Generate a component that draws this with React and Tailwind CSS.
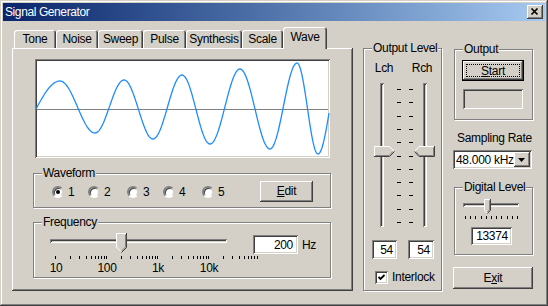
import React from 'react'

const raised = 'shadow-[inset_-1px_-1px_0_#404040,inset_1px_1px_0_#fff,inset_-2px_-2px_0_#808080]'
const sunken = 'shadow-[inset_1px_1px_0_#808080,inset_-1px_-1px_0_#fff,inset_2px_2px_0_#404040,inset_-2px_-2px_0_#d4d0c8]'
const etched = 'border border-[#808080] shadow-[inset_1px_1px_0_#fff,1px_1px_0_#fff]'

function wavePath() {
  const ext = [[60, 81], [95, 133], [124, 80], [153, 139], [182, 75], [210, 144], [240, 69], [270, 149], [297, 63], [318, 154], [342, 60]]
  const pts = []
  for (let x = 36; x <= 60; x++) {
    const t = (x - 36) / 24
    pts.push([x, 109 + (81 - 109) * Math.sin((Math.PI / 2) * t)])
  }
  for (let i = 0; i < ext.length - 1; i++) {
    const [x0, y0] = ext[i]
    const [x1, y1] = ext[i + 1]
    for (let x = x0 + 1; x <= x1 && x <= 329; x++) {
      const t = (x - x0) / (x1 - x0)
      pts.push([x, y0 + (y1 - y0) * (1 - Math.cos(Math.PI * t)) / 2])
    }
  }
  return 'M' + pts.map(p => `${p[0]},${p[1].toFixed(1)}`).join(' L')
}

function GroupLabel({ children }) {
  return (
    <span className="absolute -top-[8px] left-[8px] bg-[#d4d0c8] px-[1px] leading-[14px] whitespace-nowrap">{children}</span>
  )
}

function Track({ className }) {
  return <div className={`absolute ${sunken} bg-[#d4d0c8] ${className}`} />
}

function DownThumb() {
  return (
    <svg width="11" height="20" className="block">
      <polygon points="0,0 11,0 11,15 5.5,20 0,15" fill="#d4d0c8" />
      <path d="M5,18.5 L0.5,14 V0.5 H10" fill="none" stroke="#fff" />
      <path d="M10.5,0 V14.5 L5.5,19.5" fill="none" stroke="#404040" />
      <path d="M9.5,1.5 V14 L5.5,18" fill="none" stroke="#808080" />
    </svg>
  )
}

function SmallThumb() {
  return (
    <svg width="7" height="15" className="block">
      <polygon points="0,0 7,0 7,11 3.5,15 0,11" fill="#d4d0c8" />
      <path d="M3,14 L0.5,11 V0.5 H6" fill="none" stroke="#fff" />
      <path d="M6.5,0 V11 L3.5,14.5" fill="none" stroke="#404040" />
      <path d="M5.5,1.5 V10.5 L3.5,13" fill="none" stroke="#808080" />
    </svg>
  )
}

function RightThumb() {
  return (
    <svg width="21" height="11" className="block">
      <polygon points="0,0 15.5,0 20.5,5.5 15.5,11 0,11" fill="#d4d0c8" />
      <path d="M0.5,10 V0.5 H15.5 L20,5" fill="none" stroke="#fff" />
      <path d="M0,10.5 H15.5 L20.5,5.5" fill="none" stroke="#404040" />
      <path d="M1.5,9.5 H15 L19,5.5" fill="none" stroke="#808080" />
    </svg>
  )
}

function LeftThumb() {
  return (
    <svg width="21" height="11" className="block">
      <polygon points="0,5.5 5,0 21,0 21,11 5,11" fill="#d4d0c8" />
      <path d="M0.5,5.5 L5,0.5 H20" fill="none" stroke="#fff" />
      <path d="M0.5,5.5 L5,10.5 H20.5 V0" fill="none" stroke="#404040" />
      <path d="M2,5.5 L5.5,9.5 H19.5 V1.5" fill="none" stroke="#808080" />
    </svg>
  )
}

function Radio({ checked, label, className }) {
  return (
    <div className={`flex items-center ${className}`}>
      <div className="w-[12px] h-[12px] rounded-full bg-white border-2 border-t-[#808080] border-l-[#808080] border-b-white border-r-[#d4d0c8] shadow-[inset_1px_1px_0_#404040] flex items-center justify-center">
        {checked && <div className="w-[4px] h-[4px] rounded-full bg-black" />}
      </div>
      <span className="ml-[4px]">{label}</span>
    </div>
  )
}

function Button({ className, children }) {
  return (
    <div className={`${raised} bg-[#d4d0c8] flex items-center justify-center ${className}`}>{children}</div>
  )
}

const freqTicks = []
for (const d of [10, 100, 1000, 10000]) {
  for (let m = 1; m <= 9; m++) freqTicks.push(d * m)
}
freqTicks.push(20000)
const fx = v => 5 + (Math.log10(v) - 1) * 51

const tabs = [
  ['Tone', 'w-[42px]'],
  ['Noise', 'w-[42px]'],
  ['Sweep', 'w-[45px]'],
  ['Pulse', 'w-[43px]'],
  ['Synthesis', 'w-[56px]'],
  ['Scale', 'w-[41px]'],
]

const levelTicks = Array.from({ length: 11 }, (_, i) => 6 + i * 13.3)
const digitalTicks = Array.from({ length: 11 }, (_, i) => 2 + i * 5.2)

export default function App() {
  return (
    <div className={`w-[548px] h-[306px] bg-[#d4d0c8] p-[3px] flex flex-col overflow-hidden whitespace-nowrap tracking-[-0.3px] font-['Liberation_Sans',Arial,sans-serif] text-[12px] leading-[14px] text-black shadow-[inset_-1px_-1px_0_#404040,inset_1px_1px_0_#d4d0c8,inset_-2px_-2px_0_#808080,inset_2px_2px_0_#fff]`}>
      {/* title bar */}
      <div className="h-[18px] flex items-center justify-between bg-linear-to-r from-[#0a246a] to-[#a6caf0] pl-[2px] pr-[2px]">
        <span className="text-white tracking-[-0.4px]">Signal Generator</span>
        <Button className="w-[16px] h-[14px]">
          <svg width="16" height="14">
            <path d="M4.5,3.5 L10.5,9.5 M10.5,3.5 L4.5,9.5" stroke="#000" strokeWidth="1.7" />
          </svg>
        </Button>
      </div>

      <div className="flex items-start">
        {/* left: tabs */}
        <div className="ml-[9px] mt-[6px] w-[341px] flex flex-col">
          <div className="h-[21px] flex items-end pl-[2px] relative z-10">
            {tabs.map(([t, w]) => (
              <div key={t} className={`${w} h-[18px] flex items-center justify-center rounded-t-[3px] shadow-[inset_1px_1px_0_#fff,inset_-1px_0_0_#404040,inset_-2px_0_0_#808080]`}>
                {t}
              </div>
            ))}
            <div className="w-[44px] h-[22px] -mb-[1px] bg-[#d4d0c8] flex items-center justify-center pb-[3px] rounded-t-[3px] shadow-[inset_1px_1px_0_#fff,inset_-1px_0_0_#404040,inset_-2px_0_0_#808080]">
              Wave
            </div>
          </div>
          <div className={`h-[243px] w-[341px] ${raised} flex flex-col pl-[21px] pt-[11px]`}>
            <div className={`ml-[2px] w-[295px] h-[99px] bg-white ${sunken}`}>
              <svg width="295" height="99" viewBox="35 59 295 99" className="block">
                <line x1="37" y1="109.5" x2="328" y2="109.5" stroke="#808080" />
                <path d={wavePath()} fill="none" stroke="#1e8cff" strokeWidth="1.3" />
              </svg>
            </div>

            <div className={`relative mt-[15px] w-[298px] h-[35px] ${etched} flex items-center pl-[18px] pt-[2px]`}>
              <GroupLabel>Waveform</GroupLabel>
              <Radio checked label="1" className="w-[36px]" />
              <Radio label="2" className="w-[39px]" />
              <Radio label="3" className="w-[36px]" />
              <Radio label="4" className="w-[39px]" />
              <Radio label="5" className="w-[58px]" />
              <Button className="w-[53px] h-[21px] -mt-[1px]">
                <span><span className="underline">E</span>dit</span>
              </Button>
            </div>

            <div className={`relative mt-[14px] w-[298px] h-[56px] ${etched} flex items-start pl-[16px] pt-[10px]`}>
              <GroupLabel>Frequency</GroupLabel>
              <div className="relative w-[177px] h-[42px]">
                <Track className="left-0 right-0 top-[6px] h-[4px]" />
                {freqTicks.map(v => (
                  <div key={v} className="absolute top-[23px] w-[1px] h-[3px] bg-black" style={{ left: Math.round(fx(v)) }} />
                ))}
                {[['10', 10], ['100', 100], ['1k', 1000], ['10k', 10000]].map(([l, v]) => (
                  <span key={l} className="absolute top-[28px] -translate-x-1/2" style={{ left: fx(v) + 1 }}>{l}</span>
                ))}
                <div className="absolute left-[66px] top-0">
                  <DownThumb />
                </div>
              </div>
              <div className={`ml-[26px] mt-[2px] w-[45px] h-[19px] bg-white ${sunken} flex items-center justify-end pr-[5px]`}>200</div>
              <span className="ml-[4px] mt-[5px]">Hz</span>
            </div>
          </div>
        </div>

        {/* middle: output level */}
        <div className={`relative ml-[10px] mt-[27px] w-[79px] h-[243px] ${etched} flex flex-col`}>
          <GroupLabel>Output Level</GroupLabel>
          <div className="flex mt-[12px] pl-[1px]">
            <span className="w-[38px] text-center">Lch</span>
            <span className="w-[38px] text-center">Rch</span>
          </div>
          <div className="flex mt-[8px] pl-[10px] h-[144px]">
            <div className="relative w-[21px] h-full">
              <Track className="left-[6px] w-[4px] top-0 bottom-0" />
              <div className="absolute left-0 top-[63px]"><RightThumb /></div>
            </div>
            <div className="relative w-[19px] h-full">
              {levelTicks.map(y => (
                <React.Fragment key={y}>
                  <div className="absolute left-[2px] w-[4px] h-[1px] bg-black" style={{ top: Math.round(y) }} />
                  <div className="absolute left-[14px] w-[4px] h-[1px] bg-black" style={{ top: Math.round(y) }} />
                </React.Fragment>
              ))}
            </div>
            <div className="relative w-[21px] h-full">
              <Track className="left-[9px] w-[4px] top-0 bottom-0" />
              <div className="absolute left-0 top-[63px]"><LeftThumb /></div>
            </div>
          </div>
          <div className="flex mt-[13px] pl-[8px]">
            <div className={`w-[25px] h-[19px] bg-white ${sunken} flex items-center justify-end pr-[4px]`}>54</div>
            <div className={`ml-[11px] w-[26px] h-[19px] bg-white ${sunken} flex items-center justify-end pr-[4px]`}>54</div>
          </div>
          <div className="flex items-center mt-[11px] pl-[11px]">
            <div className={`w-[13px] h-[13px] bg-white ${sunken}`}>
              <svg width="13" height="13" className="block">
                <path d="M3.5,6 L5.5,8 L9.5,4" fill="none" stroke="#000" strokeWidth="1.8" />
              </svg>
            </div>
            <span className="ml-[4px]">Interlock</span>
          </div>
        </div>

        {/* right column */}
        <div className="ml-[11px] mt-[28px] w-[80px] flex flex-col">
          <div className={`relative ml-[1px] w-[79px] h-[71px] ${etched} flex flex-col pl-[7px] pt-[10px]`}>
            <GroupLabel>Output</GroupLabel>
            <div className="w-[62px] h-[21px] border border-black bg-[#d4d0c8]">
              <div className={`w-full h-full ${raised} p-[3px]`}>
                <div className="w-full h-full border border-dotted border-black flex items-center justify-center">
                  <span><span className="underline">S</span>tart</span>
                </div>
              </div>
            </div>
            <div className={`ml-[1px] mt-[8px] w-[60px] h-[20px] ${sunken}`} />
          </div>
          <span className="mt-[11px] pl-[4px]">Sampling Rate</span>
          <div className={`mt-[5px] w-[79px] h-[19px] bg-white ${sunken} flex items-center justify-between pl-[3px] pr-[2px]`}>
            <span>48.000 kHz</span>
            <Button className="w-[16px] h-[15px]">
              <svg width="8" height="4" className="block">
                <polygon points="0,0 7,0 3.5,4" fill="#000" />
              </svg>
            </Button>
          </div>
          <div className={`relative ml-[1px] mt-[18px] w-[79px] h-[68px] ${etched} flex flex-col pl-[8px] pt-[11px]`}>
            <GroupLabel>Digital Level</GroupLabel>
            <div className="relative w-[56px] h-[20px]">
              <Track className="left-0 right-0 top-[4px] h-[4px]" />
              {digitalTicks.map(x => (
                <div key={x} className="absolute top-[17px] w-[1px] h-[3px] bg-black" style={{ left: Math.round(x) }} />
              ))}
              <div className="absolute left-[21px] top-0"><SmallThumb /></div>
            </div>
            <div className={`ml-[8px] mt-[8px] w-[41px] h-[18px] bg-white ${sunken} flex items-center justify-end pr-[4px]`}>13374</div>
          </div>
          <Button className="mt-[12px] w-[80px] h-[22px]">
            <span>E<span className="underline">x</span>it</span>
          </Button>
        </div>
      </div>
    </div>
  )
}
